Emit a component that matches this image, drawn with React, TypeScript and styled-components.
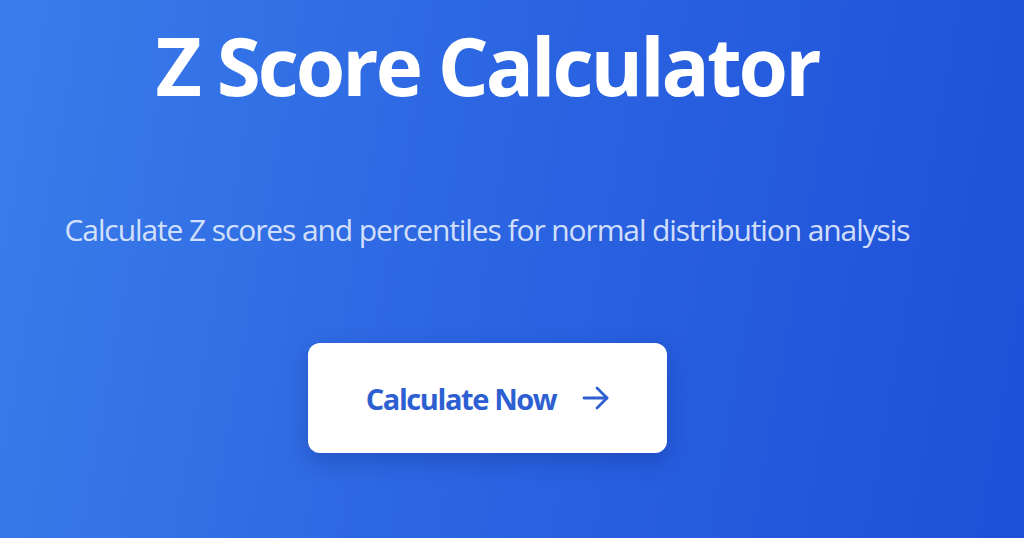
import React from "react";
import styled, { createGlobalStyle } from "styled-components";

const Global = createGlobalStyle`
  html, body { margin: 0; padding: 0; }
  body { font-family: "Open Sans", "Noto Sans", sans-serif; }
`;

const Hero = styled.section`
  width: 1024px;
  height: 538px;
  box-sizing: border-box;
  padding: 15px 50px 0 0;
  background: linear-gradient(100deg, #3a7dea 0%, #2c66e2 45%, #1e4fd8 100%);
  display: flex;
  flex-direction: column;
  align-items: center;
  overflow: hidden;
`;

const Title = styled.h1`
  margin: 0;
  font-size: 80px;
  line-height: 100px;
  font-weight: 700;
  color: #ffffff;
  letter-spacing: -3px;
`;

const Subtitle = styled.p`
  margin: 95px 0 0;
  font-size: 30px;
  line-height: 40px;
  font-weight: 400;
  color: rgba(232, 240, 255, 0.9);
  letter-spacing: -1.1px;
`;

const CtaButton = styled.button`
  margin-top: 93px;
  width: 359px;
  height: 110px;
  border: none;
  border-radius: 12px;
  background: #ffffff;
  box-shadow: 0 8px 22px rgba(10, 30, 110, 0.28);
  display: flex;
  align-items: center;
  justify-content: center;
  gap: 26px;
  padding: 0 0 0 2px;
  font-family: "Open Sans", "Noto Sans", sans-serif;
  font-size: 29px;
  font-weight: 700;
  letter-spacing: -1.4px;
  color: #2d5fd2;
  cursor: pointer;
`;

const Arrow = () => (
  <svg width="28" height="24" viewBox="0 0 28 24" fill="none" stroke="#2d5fd2" strokeWidth="2.8" strokeLinecap="round" strokeLinejoin="round">
    <path d="M2 12h23" />
    <path d="M15 2l10 10-10 10" />
  </svg>
);

export default function App() {
  return (
    <>
      <Global />
      <Hero>
        <Title>Z Score Calculator</Title>
        <Subtitle>Calculate Z scores and percentiles for normal distribution analysis</Subtitle>
        <CtaButton>
          Calculate Now
          <Arrow />
        </CtaButton>
      </Hero>
    </>
  );
}
